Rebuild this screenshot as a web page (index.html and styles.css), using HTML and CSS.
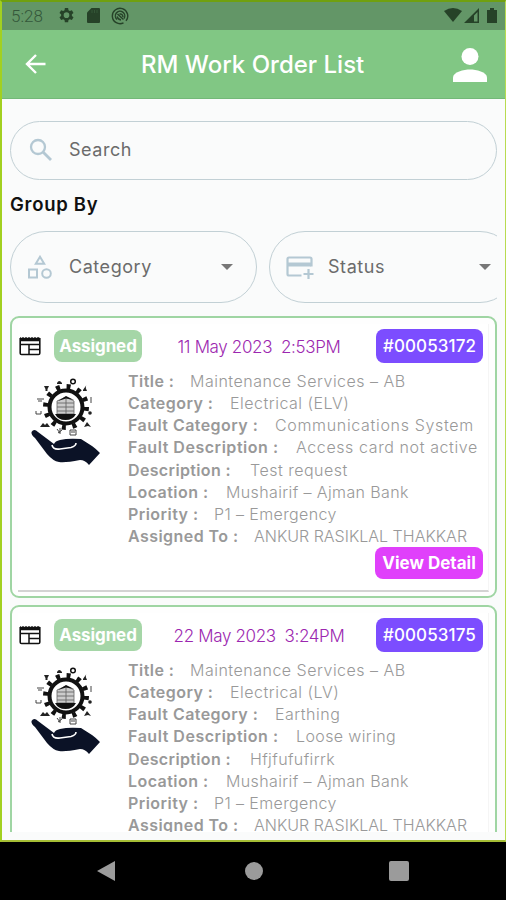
FILE: index.html
```html
<!DOCTYPE html>
<html lang="en">
<head>
<meta charset="utf-8">
<title>RM Work Order List</title>
<link rel="stylesheet" href="styles.css">
</head>
<body>
<svg class="defs" aria-hidden="true">
  <symbol id="news" viewBox="0 0 22 20">
    <path d="M1.2 2v15.2q0 1.3 1.4 1.3h16.8q1.4 0 1.4-1.3V2" fill="none" stroke="#111" stroke-width="1.6"/>
    <path d="M1 1l1.5 1L4 1l1.5 1L7 1l1.500 1L10 1l1.500 1L13 1l1.500 1L16 1l1.500 1L19 1l2 1v3.300H1z" fill="#111"/>
    <path d="M1 8.500h20M10 9v9M10 13.500h11" fill="none" stroke="#111" stroke-width="1.500"/>
  </symbol>
  <symbol id="service" viewBox="0 0 70 88">
    <circle cx="35" cy="29" r="20.500" fill="none" stroke="#111" stroke-width="5" stroke-dasharray="4 6.733"/>
    <circle cx="35" cy="29" r="16.500" fill="#fff" stroke="#111" stroke-width="4"/>
    <path d="M26 36V23l9-4 8 4v13z" fill="#ccc" stroke="#666" stroke-width=".8"/>
    <path d="M35 19v18M26 25h17M26 29h17M26 33h17" stroke="#666" stroke-width=".9"/>
    <path d="M27 23l8-5 8 4-8-1.500z" fill="#111"/>
    <path d="M24 36h21q-3 6-10.500 6T24 36z" fill="#111"/>
    <g fill="#222">
      <path d="M13 8h5l-1.500 3v2h-2v-2zM26 5q2-4 5 0v1h-5z"/>
      <path d="M52 12q4-6 3-4t1 5h-4zM9 49l3-4 2 2 2-2 3 4zM53 49l3-5 4 5-3-1z"/>
      <circle cx="59" cy="35" r="1.800"/>
    </g>
    <g fill="none" stroke="#444" stroke-width="1">
      <circle cx="42" cy="3.500" r="2.300" stroke="#111" stroke-width="1.500"/>
      <path d="M6 21h7M7 23h4M5 33v3h5v-3M60 19v6M26 51l3 4m0-5v6m-2-1l4-3M39 52h6v5h-6zM40 54h4"/>
    </g>
    <path d="M.5 54Q3 50 7 54l16 12q1-3 6-4 8-2 21-1l11 7q3 2 8 7L58 87q-4-5-9-5-15 3-21 2Q22 83 16 76L4 60Q0 57 .5 54z" fill="#0b1226"/>
    <path d="M21 67q1 5 8 4l11-1.500q5-1.500 5-4.500" fill="none" stroke="#fff" stroke-width="1.600"/>
  </symbol>
</svg>
<div class="phone">
  <div class="app">
    <div class="status">
      <span class="time">5:28</span>
      <svg class="gear" viewBox="0 0 24 24" width="17" height="17"><path fill="#264228" fill-rule="evenodd" d="M9.700 1.500h4.600l.5 3 1.900 1.100 2.900-1.100 2.300 4-2.300 1.900v2.200l2.300 1.900-2.300 4-2.900-1.100-1.900 1.100-.5 3H9.700l-.5-3-1.900-1.100-2.900 1.100-2.300-4 2.300-1.900v-2.200L2.100 8.500l2.300-4 2.900 1.100 1.900-1.100zM12 7.500a4 4 0 1 0 0 8 4 4 0 0 0 0-8z"/></svg>
      <svg class="sd" viewBox="0 0 13 15" width="13" height="15"><path fill="#264228" d="M4.500 0H12q1 0 1 1v13q0 1-1 1H1q-1 0-1-1V4.500z"/><path d="M5 2v3M7.500 2v3M10 2v3" stroke="#3b5e3e" stroke-width=".7"/></svg>
      <svg class="at" viewBox="0 0 18 18" width="18" height="18" fill="none" stroke="#264228"><path d="M12.500 15.900A7.700 7.700 0 1 1 15 13.900" stroke-width="1.400"/><path d="M6 12.500A4.700 4.700 0 1 1 13 11.500" stroke-width="1.400"/><path d="M6.500 7l6 5.500M8.500 7q3-.5 3.500 3M6 9.500q1 3 4 3.500" stroke-width="1.500"/></svg>
      <svg class="signal" viewBox="0 0 54 17" width="54" height="17" fill="#264228"><path d="M0 4q9-6 18 0L9 15z"/><path fill-rule="evenodd" d="M20 16L35 1v15zm10-1.500h3.500V5L30 8.500z"/><path d="M43 3h3V1h4v2h3v13H43z"/></svg>
    </div>
    <header class="bar">
      <svg class="back" viewBox="0 0 22 22" width="22" height="22"><path d="M21.500 11H3.500M12 2L3 11l9 9" fill="none" stroke="#fff" stroke-width="2.400"/></svg>
      <h1>RM Work Order List</h1>
      <svg class="person" viewBox="0 0 34 34" width="34" height="34" fill="#fff"><circle cx="17" cy="8.500" r="8.500"/><path d="M0 34v-4.500C0 24 11 21.500 17 21.500S34 24 34 29.500V34z"/></svg>
    </header>
    <main>
      <div class="field search">
        <svg viewBox="0 0 24 24" width="24" height="24" fill="none" stroke="#b4c8d3" stroke-width="2.300"><circle cx="9" cy="9" r="7"/><path d="M14 14l8 8" stroke-width="2.800"/></svg>
        <span>Search</span>
      </div>
      <h2>Group By</h2>
      <div class="filters">
        <div class="field drop">
          <svg viewBox="0 0 24 24" width="24" height="24" fill="none" stroke="#b4c8d3" stroke-width="2"><path d="M12 1.800l4.200 7H7.800zM1 14.500h8v8H1z"/><circle cx="18.500" cy="18.500" r="4.300"/></svg>
          <span>Category</span><i class="caret"></i>
        </div>
        <div class="field drop second">
          <svg viewBox="0 0 28 24" width="28" height="24" fill="none" stroke="#b4c8d3" stroke-width="2.200"><path d="M15.500 20.500H3q-1.500 0-1.500-1.500V4Q1.500 2.500 3 2.500h21q1.500 0 1.500 1.500v7.500M22.500 14v10M17.500 19h10"/><path d="M2 9.500h23" stroke-width="4"/></svg>
          <span>Status</span><i class="caret"></i>
        </div>
      </div>
      <div class="list">
        <article class="card"><div class="sheet">
          <div class="top">
            <svg class="news"><use href="#news"/></svg>
            <span class="tag">Assigned</span>
            <span class="date">11 May 2023&nbsp; 2:53PM</span>
            <span class="num">#00053172</span>
          </div>
          <div class="body">
            <svg class="service"><use href="#service"/></svg>
            <dl>
              <div><dt class="l1">Title :</dt><dd class="v1">Maintenance Services – AB</dd></div>
              <div><dt class="l2">Category :</dt><dd class="v2">Electrical (ELV)</dd></div>
              <div><dt class="l3">Fault Category :</dt><dd class="v3">Communications System</dd></div>
              <div><dt class="l4">Fault Description :</dt><dd class="v4">Access card not active</dd></div>
              <div><dt class="l5">Description :</dt><dd class="v5">Test request</dd></div>
              <div><dt class="l6">Location :</dt><dd class="v6">Mushairif – Ajman Bank</dd></div>
              <div><dt class="l7">Priority :</dt><dd class="v7">P1 – Emergency</dd></div>
              <div><dt class="l8">Assigned To :</dt><dd class="v8">ANKUR RASIKLAL THAKKAR</dd></div>
            </dl>
          </div>
          <div class="action"><span class="view">View Detail</span></div>
        </div></article>
        <article class="card"><div class="sheet">
          <div class="top">
            <svg class="news"><use href="#news"/></svg>
            <span class="tag">Assigned</span>
            <span class="date">22 May 2023&nbsp; 3:24PM</span>
            <span class="num">#00053175</span>
          </div>
          <div class="body">
            <svg class="service"><use href="#service"/></svg>
            <dl>
              <div><dt class="l1">Title :</dt><dd class="v1">Maintenance Services – AB</dd></div>
              <div><dt class="l2">Category :</dt><dd class="v2">Electrical (LV)</dd></div>
              <div><dt class="l3">Fault Category :</dt><dd class="v2">Earthing</dd></div>
              <div><dt class="l4">Fault Description :</dt><dd class="v6">Loose wiring</dd></div>
              <div><dt class="l5">Description :</dt><dd class="v7">Hfjfufufirrk</dd></div>
              <div><dt class="l6">Location :</dt><dd class="v6">Mushairif – Ajman Bank</dd></div>
              <div><dt class="l7">Priority :</dt><dd class="v7">P1 – Emergency</dd></div>
              <div><dt class="l8">Assigned To :</dt><dd class="v8">ANKUR RASIKLAL THAKKAR</dd></div>
            </dl>
          </div>
        </div></article>
      </div>
    </main>
  </div>
  <nav class="nav">
    <svg viewBox="0 0 18 20" width="18" height="20"><path d="M18 0v20L0 10z" fill="#9b9b9b"/></svg>
    <i class="home"></i>
    <i class="recent"></i>
  </nav>
</div>
</body>
</html>
```
FILE: styles.css
```css
* { box-sizing: border-box; }
body { margin: 0; font-family: Inter, "Liberation Sans", sans-serif; background: #000; }
h1, h2, dl, dd { margin: 0; }
svg { display: block; flex: none; }
.defs { display: none; }
.phone { width: 506px; height: 900px; display: flex; flex-direction: column; overflow: hidden; }
.app {
  height: 842px; background: #fafbfb; display: flex; flex-direction: column;
  border-style: solid; border-width: 2px 1px 2px 2px;
  border-color: #70a010 #b8db50 #a5bd35 #a2d020;
}
.status { height: 28px; flex: none; background: #639667; display: flex; align-items: center; padding: 0 7px 1px 9px; }
.time { font-family: Roboto, sans-serif; font-size: 17px; color: #34563a; width: 47px; font-weight: 300; }
.gear { margin-right: 12px; }
.sd { margin-right: 11px; }
.signal { margin-left: auto; }
.bar { height: 69px; flex: none; background: #81c784; border-bottom: 1px solid #73b878; display: flex; align-items: center; padding: 0 18px 0 22px; }
h1 { flex: 1; text-align: left; padding-left: 95px; font-size: 24px; font-weight: 500; color: #fff; white-space: nowrap; }
.person { margin-top: 2px; }
main { padding: 22px 8px 0; }
.field { border: 1.500px solid #c2d0d5; border-radius: 36px; display: flex; align-items: center; font-size: 18px; color: #6b6b6b; font-weight: 400; letter-spacing: .55px; }
.search { height: 59px; padding-left: 18px; gap: 16px; padding-bottom: 2px; }
h2 { font-size: 18.500px; font-weight: 600; line-height: 24px; margin-top: 12px; color: #111; letter-spacing: .7px; }
.filters { margin-top: 15px; display: flex; gap: 12px; overflow: hidden; }
.drop { width: 247px; height: 72px; flex: none; padding: 0 23px 0 17px; gap: 17px; }
.second { width: 247px; padding: 0 24px 0 16px; gap: 14px; }
.drop span { margin-top: -2px; }
.caret { margin-left: auto; border: 6px solid transparent; border-top-color: #777; border-bottom: 0; }
.list { margin-top: 13px; height: 516px; overflow: hidden; }
.card { height: 282px; margin-bottom: 7px; border: 2px solid #9fd5a3; border-radius: 9px; padding: 6px; background: #fefefe; }
.sheet { height: 268px; background: #fff; border-bottom: 2px solid #d3d3d3; border-right: 1px solid #f5f5f5; padding: 5px 5px 0 1px; }
.top { height: 34px; display: grid; grid-template-columns: 35px 88px 1fr 107px; align-items: center; }
.news { width: 22px; height: 20px; }
.tag, .num, .view { display: flex; align-items: center; justify-content: center; border-radius: 8px; color: #fff; font-size: 17px; white-space: nowrap; }
.tag { background: #a5d6a7; height: 32px; font-weight: 700; letter-spacing: -.1px; }
.num { background: #7c4dff; height: 34px; font-weight: 500; letter-spacing: .1px; }
.date { text-align: center; font-size: 17px; font-weight: 300; color: #9c27b0; white-space: nowrap; letter-spacing: -.35px; padding-top: 1px; }
.body { display: flex; height: 184px; }
.service { width: 70px; height: 88px; margin: 15px 27px 0 12px; }
dl { padding-top: 7px; }
dl div { display: flex; height: 22.15px; line-height: 22px; font-size: 16px; white-space: nowrap; color: #999; }
dt { font-weight: 600; letter-spacing: .45px; }
dd { font-weight: 300; }
.l1 { width: 62px; } .l2 { width: 102px; } .l3 { width: 147px; } .l4 { width: 168px; letter-spacing: .53px; }
.l5 { width: 122px; letter-spacing: .35px; } .l6 { width: 98px; } .l7 { width: 86px; } .l8 { width: 126px; }
.v1, .v2, .v5 { letter-spacing: .5px; }
.v3 { letter-spacing: .67px; }
.v4 { letter-spacing: .6px; }
.v6, .v7 { letter-spacing: .38px; }
.action { display: flex; justify-content: flex-end; }
.view { width: 108px; height: 32px; background: #e040fb; font-weight: 700; letter-spacing: 0; }
.nav { height: 58px; flex: none; background: #000; display: flex; align-items: center; justify-content: space-between; padding: 0 97px; }
.home { width: 18px; height: 18px; border-radius: 50%; background: #9b9b9b; margin-left: 3px; }
.recent { width: 20px; height: 20px; border-radius: 2px; background: #9b9b9b; }
```
